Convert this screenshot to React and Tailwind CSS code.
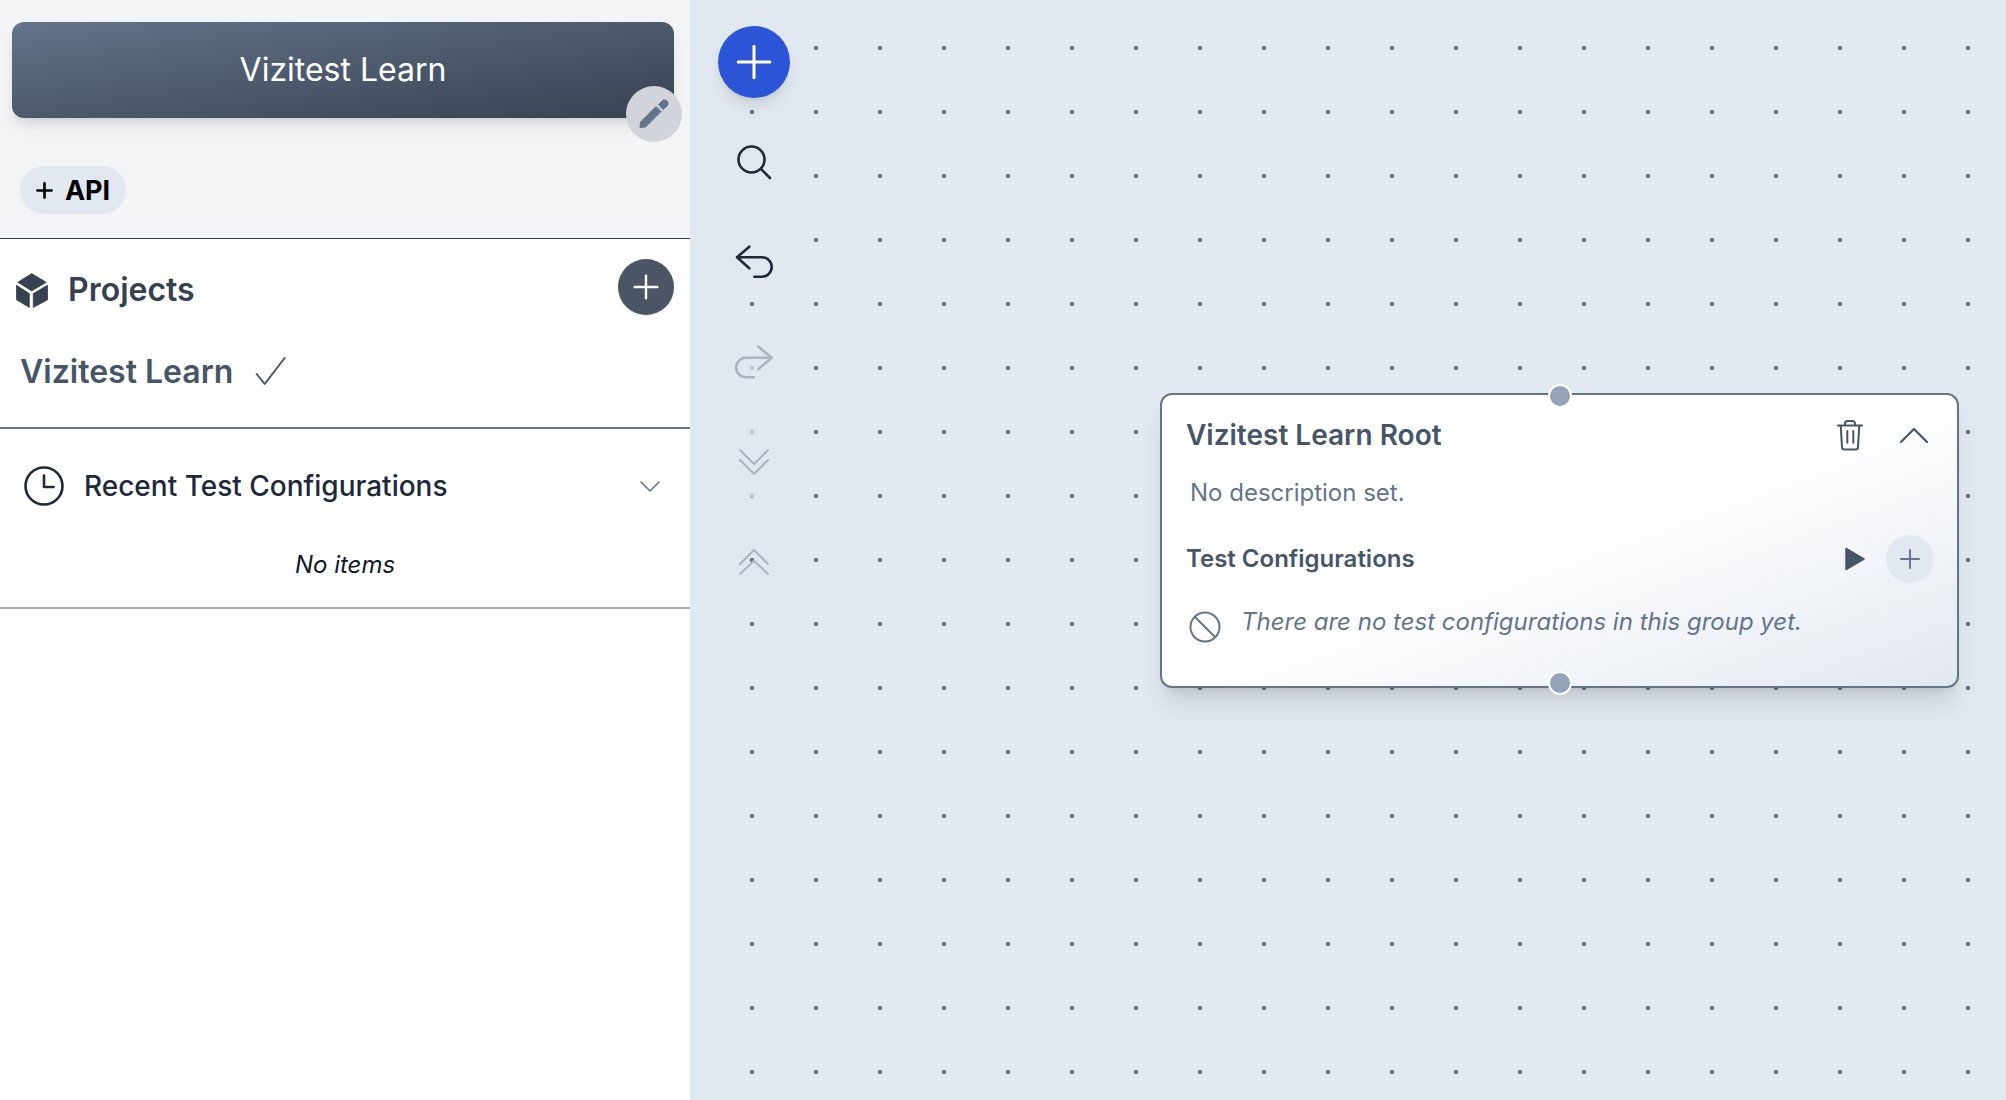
import React from "react";

const Ic = ({ className = "", vb = "0 0 24 24", sw = 2, children }) => (
  <svg viewBox={vb} fill="none" stroke="currentColor" strokeWidth={sw} strokeLinecap="round" strokeLinejoin="round" className={className}>
    {children}
  </svg>
);

function ToolBtn({ children, className = "" }) {
  return <button className={`w-[72px] h-[72px] flex items-center justify-center rounded-full ${className}`}>{children}</button>;
}

export default function App() {
  return (
    <div className="w-[2006px] h-[1100px] flex overflow-hidden bg-white font-['Inter',sans-serif]">
      <aside className="w-[690px] shrink-0 flex flex-col">
        <header className="h-[239px] bg-[#f3f4f6] border-b border-[#334155] px-[12px] pt-[22px] flex flex-col">
          <div className="relative h-[96px] w-[662px] rounded-[12px] bg-gradient-to-br from-[#64748b] to-[#374151] shadow-lg flex items-center justify-center">
            <span className="text-white text-[32px] leading-[40px]">Vizitest Learn</span>
            <button className="absolute left-[614px] top-[64px] w-[56px] h-[56px] rounded-full bg-[#d1d5db]">
              <svg viewBox="0 0 56 56" className="w-[56px] h-[56px] text-[#64748b]" fill="currentColor" stroke="currentColor" strokeWidth="1" strokeLinejoin="round">
                <path d="M14 41.5 14.5 36 30 20.5 35 25.5 19.5 41Z" />
                <path d="M32.5 18.5 36 15a3.5 3.5 0 0 1 5 5L37 23.5Z" />
              </svg>
            </button>
          </div>
          <button className="mt-[48px] ml-[8px] w-[106px] h-[48px] rounded-full bg-[#e2e8f0] flex items-center justify-center gap-[12px] text-black text-[27px] font-bold leading-none">
            <Ic className="w-[17px] h-[17px]" vb="0 0 18 18" sw={2.8}><path d="M9 1.5v15M1.5 9h15" /></Ic>
            <span>API</span>
          </button>
        </header>

        <section className="h-[190px] border-b-2 border-[#64748b] flex flex-col">
          <div className="h-[86px] pl-[16px] pr-[16px] pt-[20px] flex items-start justify-between">
            <div className="flex items-center gap-[20px] mt-[9px]">
              <svg viewBox="0 0 32 35" className="w-[32px] h-[35px] text-[#374151]" fill="currentColor" stroke="currentColor" strokeWidth="0.8" strokeLinejoin="round">
                <path d="M15.7 0.6 30.2 9.3 15.7 17.9 1.8 9.3Z" />
                <path d="M0.5 12.2 13.3 20.6V34.4L0.5 26.8Z" />
                <path d="M17.3 20.6 31.5 12.2V26.8L17.3 34.4Z" />
              </svg>
              <h2 className="text-[32px] leading-[44px] font-semibold text-[#374151]">Projects</h2>
            </div>
            <button className="w-[56px] h-[56px] rounded-full bg-[#4b5563] flex items-center justify-center text-white shadow">
              <Ic className="w-[32px] h-[32px]" sw={1.8}><path d="M12 3.5v17M3.5 12h17" /></Ic>
            </button>
          </div>
          <div className="flex items-center pl-[20px] gap-[21px] h-[48px] mt-[23px]">
            <span className="text-[32px] font-semibold text-[#475569] leading-[40px]">Vizitest Learn</span>
            <Ic className="w-[32px] h-[32px] text-[#475569]" sw={1.5}><path d="M2 13.5 8 21 23 1.5" /></Ic>
          </div>
        </section>

        <section className="h-[180px] border-b-2 border-[#a1a9b5] flex flex-col">
          <div className="h-[96px] mt-[9px] flex items-center pl-[24px] pr-[28px]">
            <Ic className="w-[40px] h-[40px] text-[#1e293b]" vb="0 0 40 40" sw={2.6}>
              <circle cx="20" cy="20" r="18.5" />
              <path d="M20 9.5V21h9.5" />
            </Ic>
            <span className="ml-[20px] text-[28px] font-medium text-[#1e293b] flex-1">Recent Test Configurations</span>
            <Ic className="w-[24px] h-[24px] text-[#64748b]" sw={1.6}><path d="M3 8l9 9 9-9" /></Ic>
          </div>
          <p className="text-center italic text-[24px] leading-[32px] text-[#111827] mt-[15px]">No items</p>
        </section>
        <div className="flex-1 bg-white" />
      </aside>

      <main className="relative flex-1 bg-[#e2e8f0] bg-[radial-gradient(circle,#64748b_2px,transparent_2.5px)] bg-[size:64px_64px] bg-[position:30px_16px] pl-[28px] pt-[26px] flex flex-col gap-[28px]">
        <ToolBtn className="bg-[#2b55d6] text-white shadow-lg">
          <Ic className="w-[40px] h-[40px]" sw={1.8}><path d="M12 2.5v19M2.5 12h19" /></Ic>
        </ToolBtn>
        <ToolBtn className="bg-[#e2e8f0] text-[#1e293b]">
          <Ic className="w-[40px] h-[40px]" vb="0 0 40 40" sw={2.6}><circle cx="17.5" cy="17.5" r="13" /><path d="M27 27l9 9" /></Ic>
        </ToolBtn>
        <ToolBtn className="bg-[#e2e8f0] text-[#1e293b]">
          <Ic className="w-[40px] h-[40px]" vb="0 0 40 40" sw={2.6}><path d="M15.3 4.7 3 15.3 15.3 26.3M3 15.3H28a9.7 9.7 0 0 1 0 19.4H20.3" /></Ic>
        </ToolBtn>
        <ToolBtn className="bg-[#e2e8f0]/70 text-[#adb3bf]">
          <Ic className="w-[40px] h-[40px]" vb="0 0 40 40" sw={2.6}><path d="M24.3 4.7 37.7 15.7 24.3 27.3M37.7 15.7H12a9.8 9.8 0 0 0 0 19.6H20" /></Ic>
        </ToolBtn>
        <ToolBtn className="bg-[#e2e8f0]/70 text-[#adb3bf]">
          <Ic className="w-[32px] h-[32px]" vb="0 0 32 32" sw={2}><path d="M2 4 16 18 30 4M2 14 16 28 30 14" /></Ic>
        </ToolBtn>
        <ToolBtn className="text-[#adb3bf]">
          <Ic className="w-[32px] h-[32px]" vb="0 0 32 32" sw={2}><path d="M2 18 16 4 30 18M2 28 16 14.7 30 28" /></Ic>
        </ToolBtn>

        <div className="absolute left-[470px] top-[393px] w-[799px] h-[295px] rounded-[12px] border-2 border-[#64748b] bg-gradient-to-br from-white from-50% to-[#e2e8f0] shadow-xl">
          <span className="absolute left-[386px] top-[-11px] w-[24px] h-[24px] rounded-full bg-[#94a3b8] border-2 border-white" />
          <span className="absolute left-[386px] bottom-[-9px] w-[24px] h-[24px] rounded-full bg-[#94a3b8] border-2 border-white" />
          <div className="flex items-center pl-[24px] pr-[28px] h-[40px] mt-[20px]">
            <h3 className="flex-1 text-[28px] font-semibold text-[#475569]">Vizitest Learn Root</h3>
            <Ic className="w-[28px] h-[31px] text-[#475569] mr-[35px]" vb="0 0 28 31" sw={2}>
              <path d="M2 5.5H26M9 5.5V3.5a2.5 2.5 0 0 1 2.5-2.5h5a2.5 2.5 0 0 1 2.5 2.5V5.5M4.7 5.5 6 27a2.5 2.5 0 0 0 2.5 2.5h11a2.5 2.5 0 0 0 2.5-2.5L23.3 5.5M11.3 11v11.7M17.3 11v11.7" />
            </Ic>
            <Ic className="w-[30px] h-[18px] text-[#475569]" vb="0 0 30 18" sw={2.2}><path d="M2 16 15 3l13 13" /></Ic>
          </div>
          <p className="ml-[28px] mt-[22px] text-[24px] leading-[32px] text-[#64748b]">No description set.</p>
          <div className="flex items-center pl-[24px] pr-[23px] mt-[26px] h-[48px]">
            <h4 className="flex-1 text-[24px] font-semibold text-[#475569]">Test Configurations</h4>
            <svg viewBox="0 0 20 24" className="w-[20px] h-[24px] text-[#475569] mr-[21px]" fill="currentColor" stroke="currentColor" strokeWidth="1.5" strokeLinejoin="round"><path d="M1 1.5v21L19 12z" /></svg>
            <button className="w-[48px] h-[48px] rounded-full bg-[#e2e8f0] flex items-center justify-center text-[#64748b]">
              <Ic className="w-[24px] h-[24px]" sw={1.9}><path d="M12 3v18M3 12h18" /></Ic>
            </button>
          </div>
          <div className="flex items-start pl-[27px] mt-[23px]">
            <Ic className="w-[32px] h-[32px] mt-[5px] text-[#64748b]" vb="0 0 32 32" sw={2}><circle cx="16" cy="16" r="14.5" /><path d="M6 6l20 20" /></Ic>
            <p className="ml-[20px] text-[24px] leading-[32px] italic text-[#64748b]">There are no test configurations in this group yet.</p>
          </div>
        </div>
      </main>
    </div>
  );
}
